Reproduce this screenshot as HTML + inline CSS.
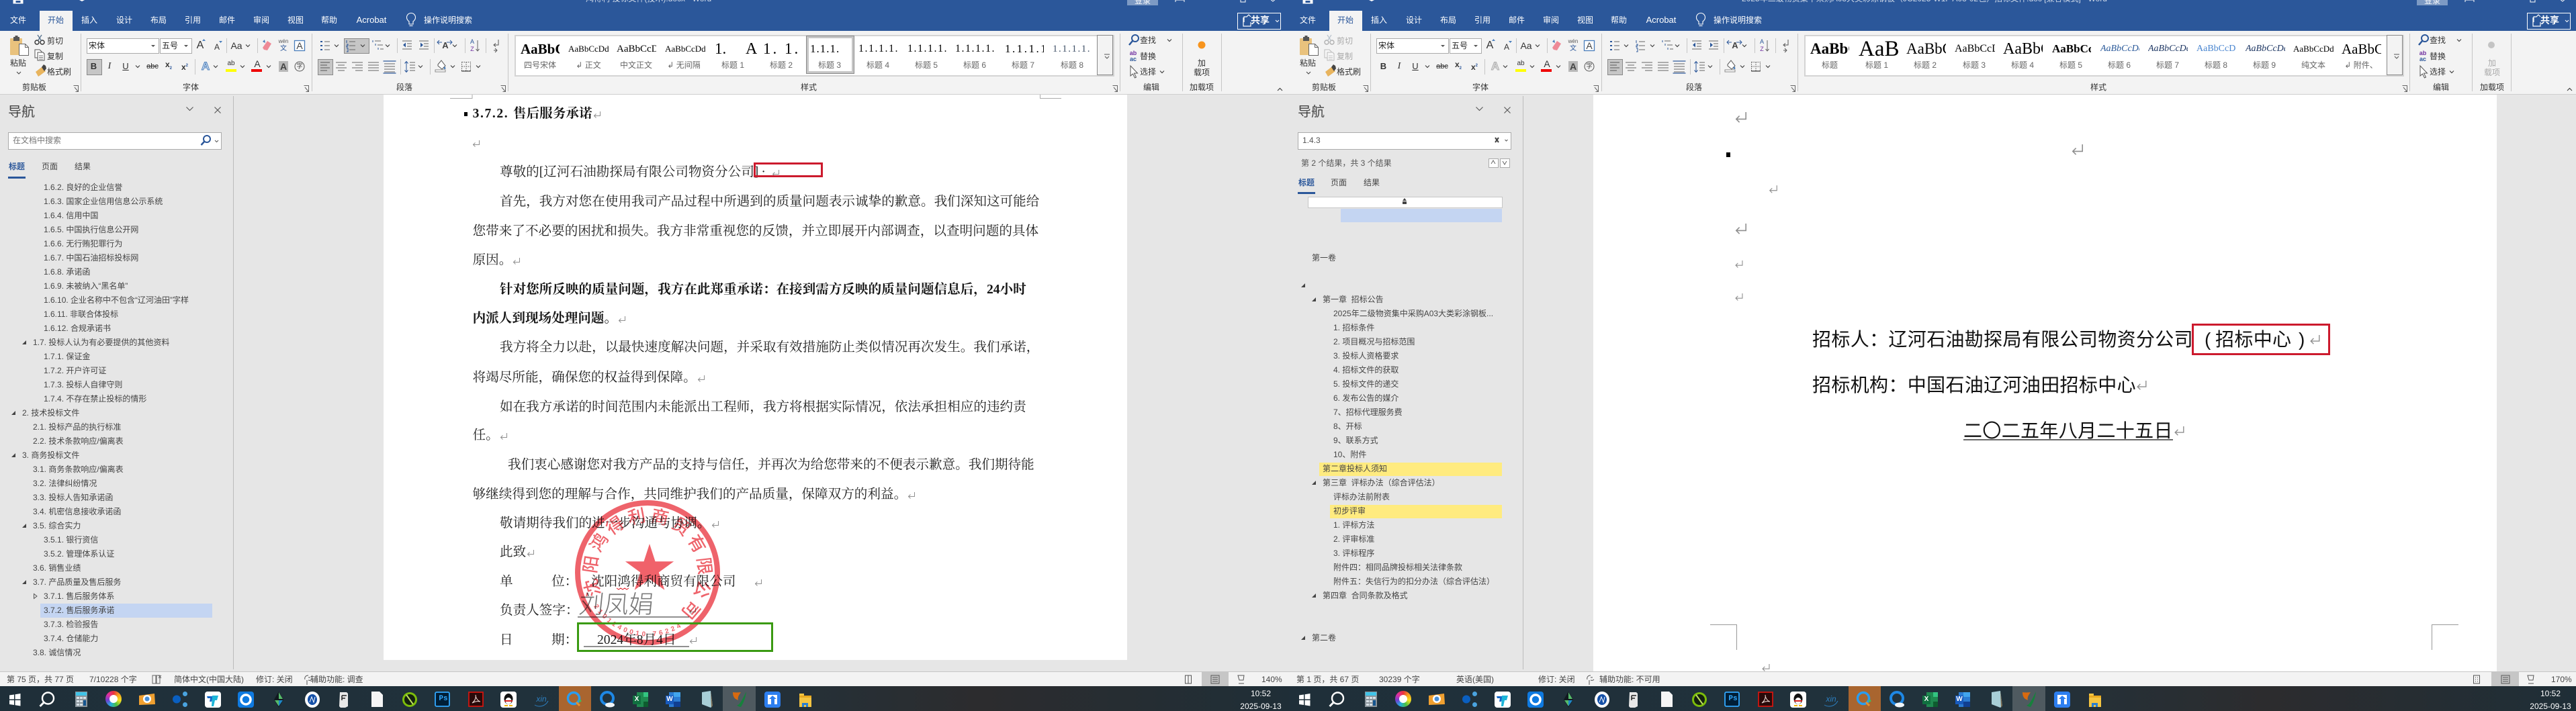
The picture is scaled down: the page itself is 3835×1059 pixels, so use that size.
<!DOCTYPE html>
<html lang="zh-CN"><head><meta charset="utf-8"><title>Word</title>
<style>
html,body{margin:0;padding:0;background:#e6e6e6}
body{position:relative;width:3835px;height:1059px;overflow:hidden;font:12px/14px "Liberation Sans","Noto Sans CJK SC",sans-serif;color:#333}
.w{position:absolute;top:0;height:1059px;overflow:hidden;background:#e6e6e6}
.b{position:absolute}
p{position:absolute;margin:0;white-space:nowrap;transform:translateY(-50%)}
p.c{transform:translate(-50%,-50%)}
.tab{top:30px;color:#fff}
.g{top:97px;color:#666}
.gp{top:73px;overflow:hidden;color:#000;font-family:"Liberation Serif",serif;line-height:34px}
.lb{top:130px;color:#333}
.n{color:#454545}
.d{font:19.6px/24px "Liberation Serif","Noto Serif CJK SC",serif;color:#222}
.dd{font-weight:700;color:#151515}
.h{font:28px/34px "Liberation Sans","Noto Sans CJK SC",sans-serif;letter-spacing:.35px;color:#111;font-weight:400}
.r{display:inline-block;width:12px;height:10px;vertical-align:-1px;margin-left:1px}
.R{position:absolute}
svg.full{position:absolute;left:0;top:0}
.s{top:1012px;color:#444}
.ck{color:#fff;top:1033px}
</style></head><body>
<svg width="0" height="0" style="position:absolute">
<defs>
<symbol id="r" viewBox="0 0 12 10"><path d="M10.5 0V6.5H1.5M4.5 3.5L1.5 6.5L4.5 9.5" fill="none" stroke="#8f8f8f" stroke-width="1"/></symbol>
<g id="cut"><circle cx="55" cy="63" r="3" fill="none" stroke="#333" stroke-width="1.4"/><circle cx="63" cy="63" r="3" fill="none" stroke="#333" stroke-width="1.4"/><path d="M56.5 60.5L62 52M61.5 60.5L56 52" stroke="#5b7590" stroke-width="1.4" fill="none"/></g>
<g id="copy"><path d="M52 74h7l3 3v9h-10z" fill="#fff" stroke="#555"/><path d="M56 78h8l2 2v10h-10z" fill="#fff" stroke="#555"/><path d="M58 83h6M58 85.5h6M58 88h6" stroke="#777"/></g>
<g id="rib">
<path d="M120.5 50V136M464.5 50V136M756.5 50V136M1667.5 50V136M1760.5 50V136M1818.5 50V136M337.5 57V79M383.5 57V79M290.5 88V111M591.5 57V79M646.5 57V79M692.5 57V79M723.5 57V79M596.5 88V111M640.5 88V111" stroke="#c6c6c6" fill="none"/>
<path d="M609 32c-2-1.500-3.500-3.500-3.500-6a6.500 6.500 0 0 1 13 0c0 2.500-1.500 4.500-3.500 6v4h-6zM609.500 38.500h5" fill="none" stroke="#fff" stroke-width="1.100"/>
<rect x="15" y="57" width="18" height="25" rx="1" fill="#e9c27d"/><rect x="20" y="55" width="9" height="6" fill="#555"/><rect x="22.5" y="53" width="4" height="3" fill="#555"/><path d="M28.5 65.5h9l5 5v12h-14z" fill="#fff" stroke="#666"/><path d="M37.5 65.5v5h5" fill="none" stroke="#666"/>
<path d="M25 107l3 3 3-3" stroke="#444" fill="none"/>
<path d="M53 107l9-7 6 6-8 6-3 2z" fill="#e8b45e"/><path d="M62 100l3-4 3 2 1 4-3 4z" fill="#444"/>
<path d="M109.5 127.5h7v9M111 130l5 6M116.5 132v4.5h-4M452.5 127.5h7v9M454 130l5 6M459.5 132v4.5h-4M745.5 127.5h7v9M747 130l5 6M752.5 132v4.5h-4M1656.5 127.5h7v9M1658 130l5 6M1663.5 132v4.5h-4" stroke="#666" fill="none"/>
<path d="M225 67h6l-3 3zM274 67h6l-3 3z" fill="#555"/>
<path d="M202 97.5l3 3 3-3M318 97.5l3 3 3-3M358 97.5l3 3 3-3M397 97.5l3 3 3-3M366 66.5l3 3 3-3M498 66.5l3 3 3-3M537 66.5l3 3 3-3M574 66.5l3 3 3-3M674 66.5l3 3 3-3M623 97.5l3 3 3-3M671 97.5l3 3 3-3M709 97.5l3 3 3-3M1738 58.5l3 3 3-3M1727 105.5l3 3 3-3" stroke="#444" fill="none" stroke-width="1.2"/>
<path d="M301 61l2.5-3 2.5 3zM326 61l2.5 3 2.5-3z" fill="#4a7ebb"/>
<path d="M391 71l7-10 6 4-6 10-5-1z" fill="#ee8a97"/><path d="M391 62l3-3 1 5z" fill="#4a7ebb"/>
<rect x="438.5" y="60.5" width="15" height="15" fill="#fff" stroke="#4a7ebb" stroke-width="1.3"/>
<path d="M477 61h3v2h-3zM477 67h3v2h-3zM477 73h3v2h-3z" fill="#2b579a"/><path d="M483 62h8M483 68h8M483 74h8" stroke="#666" fill="none"/>
<path d="M520 62h9M520 68h9M520 74h9" stroke="#666" fill="none"/><path d="M516 60v4M516 66h2v2h-2v2h2M516 72h2v5h-2" stroke="#2b579a" fill="none"/>
<path d="M558 61h9M562 67h8M566 73h5" stroke="#666" fill="none"/><path d="M555 60v3M559 65v3M563 71v3" stroke="#2b579a" fill="none"/>
<path d="M599 61h14M606 65h7M606 69h7M599 73h14" stroke="#666" fill="none"/><path d="M604 63.5v7l-4-3.5zM626 63.5v7l4-3.5z" fill="#2b579a"/>
<path d="M624 61h14M631 65h7M631 69h7M624 73h14" stroke="#666" fill="none"/>
<path d="M654 60l-3 3 3 3M651 63h7M670 60l3 3-3 3M665 63h7" stroke="#2b579a" fill="none"/>
<path d="M711 60v16M708.5 73l2.5 3 2.5-3" stroke="#666" fill="none"/>
<path d="M742 59v8h-6M738 64.5l-3 2.5 3 2.5M735 75h4M737 72l3 3-3 3" stroke="#555" fill="none"/>
<path d="M477 93h14M477 97h10M477 101h14M477 105h10" stroke="#555" fill="none"/>
<path d="M500 93h16M503 97h10M500 101h16M503 105h10M524 93h16M529 97h11M524 101h16M529 105h11M548 93h16M548 97h16M548 101h16M548 105h16M572 95h16M572 99h16M572 103h16M572 107h16" stroke="#666" fill="none"/>
<path d="M570.5 91h19M570.5 109h19" stroke="#2b579a" stroke-width="1.3" fill="none"/>
<path d="M605 92v15M602.5 94.5l2.5-3 2.5 3M602.5 104.5l2.5 3 2.5-3" stroke="#2b579a" fill="none"/><path d="M610 93h8M610 97h8M610 101h8M610 105h8" stroke="#666" fill="none"/>
<path d="M652 96l5-6 6 8-5 5-6-5z" fill="#fff" stroke="#555"/><path d="M648 104h15v3h-15z" fill="#fff" stroke="#888"/><path d="M662 99c2 2 2 4 0 4-2 0-2-2 0-4z" fill="#4a7ebb"/>
<path d="M687.5 92.5h13v13h-13zM687.5 99h13M694 92.5v13" stroke="#555" stroke-dasharray="1.5 1.5" fill="none"/><path d="M687 106h14" stroke="#333"/>
<circle cx="1690" cy="57" r="5" fill="none" stroke="#2b579a" stroke-width="2"/><path d="M1686 61l-5 6" stroke="#2b579a" stroke-width="2.5"/>
<path d="M1683 98l0 15 3.5-3 3 6 2-1-3-6h5z" fill="#fff" stroke="#555"/>
<path d="M1852 33v-8h4l3-3 3 3 M1851 26v13h11v-6" stroke="#fff" fill="none" stroke-width="1.2"/><path d="M1899 30l2.5 2.5 2.5-2.5" stroke="#fff" fill="none"/>
<path d="M1902 135l3.5-3.5 3.5 3.5" stroke="#444" fill="none" stroke-width="1.2"/>
<path d="M20 -8h14v13h-14zM23 1h8v4h-8z" fill="#fff" stroke="#fff"/><rect x="23.5" y="1" width="7" height="3" fill="#2b579a"/>
<path d="M1750 3V0h13v3M1847 0v3h7V0M1890 -2l5 4 5-4" stroke="#fff" fill="none"/>
<path d="M118 0l4 2 4-2z" fill="#fff"/>
<path d="M277.5 159.5l5 5 5-5M319.5 159.5l9 9M328.5 159.5l-9 9" stroke="#555" fill="none" stroke-width="1.1"/>
<path d="M347.5 143V997" stroke="#bcbcbc" fill="none"/>
</g>
<g id="tb">
<path d="M14 1035.5l7-1v7h-7zM22.5 1034.3l8-1.3v8.5h-8zM14 1043h7v7l-7-1zM22.5 1043h8v8.5l-8-1.3z" fill="#fff"/>
<circle cx="71.5" cy="1040" r="8.5" fill="none" stroke="#fff" stroke-width="2.4"/><path d="M65 1046.5l-5.5 5.5" stroke="#fff" stroke-width="3"/>
<rect x="112" y="1030" width="18" height="23" fill="#8a949b"/><rect x="113" y="1031" width="16" height="5" fill="#3fc4e8"/><path d="M114 1038h4v3h-4zM119 1038h4v3h-4zM124 1038h4v3h-4zM114 1043h4v3h-4zM119 1043h4v3h-4zM114 1048h4v3h-4zM119 1048h4v3h-4z" fill="#d9e2e8"/><rect x="124" y="1043" width="4" height="8" fill="#15558f"/>
<path d="M207 1036l23-3 1 16-24 1z" fill="#f0a030"/><circle cx="219" cy="1041" r="6" fill="#fff"/><circle cx="219" cy="1041" r="3.5" fill="#4a90d9"/>
<circle cx="263" cy="1041.5" r="6" fill="#0a5fc0"/><circle cx="275.5" cy="1033.5" r="3.5" fill="#4aa3df"/><circle cx="275.5" cy="1049.5" r="3.5" fill="#4aa3df"/>
<rect x="305" y="1030" width="24" height="24" rx="4" fill="#fff"/><path d="M308 1037h9l-2 8h-3l1-5h-4z" fill="#1467c8"/><path d="M316 1036h9l-2 7h-3l-2 9h-3z" fill="#1cb5d8"/>
<rect x="354" y="1030" width="24" height="24" rx="4" fill="#0f7ae0"/><circle cx="366" cy="1042" r="7" fill="none" stroke="#fff" stroke-width="3.5"/>
<path d="M415 1030l7 12-7 12-7-12z" fill="#111a1f"/><path d="M415 1031l6 10h-6zM409 1043h6v9z" fill="#55b96a"/><path d="M421 1043l-6 9v-9z" fill="#1e88c8"/>
<ellipse cx="465" cy="1042" rx="11" ry="12" fill="#fff"/><ellipse cx="465" cy="1042" rx="7" ry="8" fill="#1450a8"/><path d="M461 1046l3-8 3 8 2-8" stroke="#fff" fill="none"/>
<path d="M506 1031h10l2 2v19l-4 2h-7l-2-2z" fill="#e8e8e8"/><path d="M509 1036h7M509 1036v7M509 1040h5" stroke="#222" stroke-width="1.5" fill="none"/>
<path d="M553 1030h12l5 5v18h-17z" fill="#f5f5f5"/>
<circle cx="610" cy="1042" r="11" fill="#7cbd0a"/><circle cx="610" cy="1042" r="8" fill="#14210f"/><path d="M605 1035l10 14" stroke="#bfe060" stroke-width="2"/>
<rect x="648" y="1031" width="21" height="21" rx="2" fill="#001e36" stroke="#31a8ff" stroke-width="1.8"/>
<rect x="698" y="1031" width="21" height="21" fill="#2a0a0a" stroke="#d0150f" stroke-width="1.8"/><path d="M703 1047c4-3 6-8 5-12 0 4 3 9 7 10-5-1-8 0-12 2z" fill="none" stroke="#f0ddd8"/>
<rect x="745" y="1030" width="24" height="24" rx="4" fill="#fff"/><ellipse cx="757" cy="1041" rx="6.5" ry="8" fill="#111"/><ellipse cx="757" cy="1044" rx="4.5" ry="5" fill="#fff"/><path d="M751 1043h12v2h-12z" fill="#d81f1f"/><path d="M751 1050h5v2h-5zM758 1050h5v2h-5z" fill="#f4b400"/>
<path d="M796 1050c7 4 16 2 20-6" fill="none" stroke="#2c7fc0"/>
<rect x="832" y="1022" width="48" height="37" fill="#a9652f"/>
<circle cx="854" cy="1040" r="8.5" fill="none" stroke="#2a9df0" stroke-width="3.5"/><path d="M858 1046l5 5" stroke="#e8902c" stroke-width="3"/><path d="M862 1045l3-2" stroke="#3ac060" stroke-width="3"/>
<circle cx="904" cy="1040" r="9" fill="none" stroke="#1e88e5" stroke-width="4"/><ellipse cx="908" cy="1050" rx="7" ry="3.5" fill="#f0f5f8"/>
<rect x="948" y="1031" width="17" height="22" fill="#1f8a50"/><rect x="958" y="1031" width="7" height="7" fill="#33c481"/><rect x="958" y="1045" width="7" height="8" fill="#0e5c2f"/><rect x="942" y="1036" width="12" height="13" fill="#107040"/>
<rect x="996" y="1031" width="17" height="22" fill="#2b7cd3"/><rect x="1003" y="1031" width="10" height="7" fill="#41a5ee"/><rect x="1003" y="1045" width="10" height="8" fill="#103f91"/><rect x="991" y="1036" width="12" height="13" fill="#185abd"/>
<path d="M1045 1031l13-2 3 22-3 3-13-5z" fill="#a8cfd8"/><path d="M1058 1029l3 22-2 3z" fill="#7a6a50"/>
<rect x="1076" y="1022" width="49" height="37" fill="#4f5a60"/>
<path d="M1091 1031c6 1 12 0 12 0l-2 3c-2 3-3 6-2 9l-4-2c-3-2-4-6-4-10z" fill="#d86a10"/><path d="M1111 1030c-1 9-4 17-8 23-4 0-6-3-6-3 4 1 8-8 14-20z" fill="#17803c"/>
<rect x="1138" y="1030" width="24" height="24" rx="4" fill="#2d7ff0"/><path d="M1143 1035h14v14h-4v-8h3l-6-5-5 5h3v8h-5z" fill="#fff"/>
<path d="M1190 1033h7v3h11v17h-18z" fill="#f4c542"/><path d="M1190 1036h18v3h-18z" fill="#e8a920"/><path d="M1194 1053v-6h9v6h-3v-3h-3v3z" fill="#2a7fd0"/>
</g>
</defs></svg>

<!-- LEFT WINDOW -->
<div class="w" style="left:0;width:1920px">
<div class="b" style="left:0;top:0;width:1920px;height:46px;background:#2b579a"></div>
<div class="b" style="left:59px;top:16px;width:49px;height:30px;background:#f3f3f3"></div>
<div class="b" style="left:0;top:46px;width:1920px;height:94px;background:#f3f3f3;border-bottom:1px solid #cfcfcf"></div>
<div class="b" style="left:1678px;top:0;width:46px;height:8px;background:#7d9ac4"></div>
<div class="b" style="left:1842px;top:19px;width:63px;height:23px;border:1px solid #fff"></div>
<div class="b" style="left:129px;top:57px;width:106px;height:21px;background:#fff;border:1px solid #ababab"></div>
<div class="b" style="left:238px;top:57px;width:46px;height:21px;background:#fff;border:1px solid #ababab"></div>
<div class="b" style="left:512px;top:57px;width:36px;height:21px;background:#c6c6c6;border:1px solid #8a8a8a"></div>
<div class="b" style="left:129px;top:88px;width:21px;height:22px;background:#c6c6c6;border:1px solid #8a8a8a"></div>
<div class="b" style="left:473px;top:88px;width:21px;height:22px;background:#c6c6c6;border:1px solid #8a8a8a"></div>
<div class="b" style="left:415px;top:91px;width:14px;height:16px;background:#b8b8b8"></div>
<div class="b" style="left:336px;top:103px;width:16px;height:4px;background:#ff0"></div>
<div class="b" style="left:374px;top:103px;width:16px;height:4px;background:#e00"></div>
<div class="b" style="left:766px;top:52px;width:889px;height:58px;background:#fff;border:2px solid #d4d4d4"></div>
<div class="b" style="left:1633px;top:52px;width:22px;height:58px;background:#f3f3f3;border:1px solid #888"></div>
<div class="b" style="left:1200px;top:53px;width:64px;height:49px;background:#fff;border:4px solid #c6c6c6;outline:1px solid #8a8a8a;outline-offset:-1px"></div>
<div class="b" style="left:571px;top:141px;width:1107px;height:842px;background:#fff"></div>
<div class="b" style="left:12px;top:197px;width:316px;height:24px;background:#fff;border:1px solid #ababab"></div>
<div class="b" style="left:12px;top:263px;width:26px;height:3px;background:#2b579a"></div>
<div class="b" style="left:60px;top:899px;width:256px;height:21px;background:#c4d5f2"></div>
<div class="b" style="left:0;top:1000px;width:1920px;height:22px;background:#f3f3f3;border-top:1px solid #c6c6c6;box-sizing:border-box"></div>
<div class="b" style="left:1789px;top:1001px;width:40px;height:21px;background:#c6c6c6"></div>
<div class="b" style="left:0;top:1022px;width:1920px;height:37px;background:linear-gradient(90deg,#1f2f39 0,#21323c 55%,#2c2c2e 76%,#1f2e37 100%)"></div>
<svg class="full" width="1920" height="1059"><use href="#rib"/><use href="#cut"/><use href="#copy"/><use href="#tb"/>
<path d="M1644 81h8M1645 84l3 3 3-3" stroke="#555" fill="none"/>
<circle cx="1789" cy="67" r="5.5" fill="#f7941d"/>
<circle cx="308" cy="207" r="5" fill="none" stroke="#2b579a" stroke-width="2"/><path d="M304 211l-4.5 5" stroke="#2b579a" stroke-width="2.5"/><path d="M320 209l2.5 2.5 2.5-2.5" stroke="#555" fill="none"/>
<path d="M39 507V513H33ZM23 612V618H17ZM23 675V681H17ZM39 780V786H33ZM39 864V870H33Z" fill="#444"/>
<path d="M50.5 884.5l4.5 3.5-4.5 3.5z" fill="none" stroke="#555"/>
<path d="M670 146.5h33M703 141v6M1548 146.5h32M1548.5 141v6" stroke="#aaa" fill="none"/>
<path d="M227 1006h5v12h-5zM233 1006h5v12h-5zM236 1006l4 4M240 1006l-4 4" stroke="#666" fill="none"/>
<path d="M459 1006c-4 0-6 3-5 6M457 1013v7M459 1009h3M459 1013c3 1 4 0 5-1" stroke="#555" fill="none"/>
<path d="M1764.5 1006h9v12h-9zM1769 1006v12M1803 1006h12v12h-12zM1805 1009h8M1805 1012h8M1805 1015h8M1843 1006h9l-1 7h-6zM1844 1018h8" stroke="#555" fill="none"/>
<rect x="691" y="167" width="5" height="6" fill="#000"/>
<path d="M860 919h166M869 963h157" stroke="#222" stroke-width="1"/>
<path d="M918 876l3 2 3-2 3 2 3-2 3 2 3-2" stroke="#e0141e" fill="none"/>
</svg>
<div class="b" style="left:157px;top:1029px;width:24px;height:24px;border-radius:50%;background:conic-gradient(#e8323c,#f4a020,#f5e020,#4ac040,#20b0e0,#7040d0,#e030a0,#e8323c)"></div>
<div class="b" style="left:163px;top:1035px;width:12px;height:12px;border-radius:50%;background:#fff"></div>

<p style="left:872px;top:-2px;color:#cfd9e8">鸿得利 投标文件(技术).docx - Word</p>
<p class="c" style="left:1701px;top:1px;color:#fff">登录</p>
<p class="c tab" style="left:27px">文件</p><p class="c tab" style="left:83px;color:#2b579a">开始</p><p class="c tab" style="left:133px">插入</p><p class="c tab" style="left:185px">设计</p><p class="c tab" style="left:236px">布局</p><p class="c tab" style="left:287px">引用</p><p class="c tab" style="left:338px">邮件</p><p class="c tab" style="left:389px">审阅</p><p class="c tab" style="left:440px">视图</p><p class="c tab" style="left:490px">帮助</p><p class="c tab" style="left:553px;font-size:13px">Acrobat</p>
<p class="c tab" style="left:667px">操作说明搜索</p>
<p class="c tab" style="left:1876px;font-size:14px;font-weight:700">共享</p>

<p class="c" style="left:27px;top:94px">粘贴</p><p style="left:70px;top:61px">剪切</p><p style="left:70px;top:84px">复制</p><p style="left:70px;top:107px">格式刷</p><p class="c lb" style="left:51px">剪贴板</p>
<p style="left:132px;top:68px;font-size:12px;color:#222">宋体</p><p style="left:241px;top:68px;color:#222">五号</p>
<p class="c" style="left:298px;top:68px;font-size:16px">A</p><p class="c" style="left:323px;top:70px;font-size:12px">A</p><p class="c" style="left:352px;top:68px;font-size:14px">Aa</p>
<p class="c" style="left:422px;top:62px;font-size:8px;color:#555">wén</p><p class="c" style="left:422px;top:73px;font-size:10px;color:#2b579a">文</p><p class="c" style="left:446px;top:68px;font-size:14px;color:#444">A</p>
<p class="c" style="left:139.5px;top:99px;font-size:13px;font-weight:700">B</p><p class="c" style="left:163px;top:99px;font:italic 14px 'Liberation Serif',serif">I</p><p class="c" style="left:187px;top:99px;font-size:13px;text-decoration:underline">U</p><p class="c" style="left:227px;top:99px;font-size:11px;text-decoration:line-through">abc</p><p class="c" style="left:251px;top:99px;font-size:12px;font-weight:700">x<sub style="font-size:6px;color:#2b579a">2</sub></p><p class="c" style="left:275px;top:99px;font-size:12px;font-weight:700">x<sup style="font-size:6px;color:#2b579a">2</sup></p>
<p class="c" style="left:306px;top:99px;font-size:17px;font-weight:700;color:#dbe7f5;-webkit-text-stroke:1px #4a7ebb">A</p>
<p class="c" style="left:344px;top:95px;font-size:10px">ab</p><p class="c" style="left:383px;top:95px;font-size:14px;color:#333">A</p><p class="c" style="left:422px;top:99px;font-size:14px;font-weight:700;color:#444">A</p><p class="c" style="left:446px;top:99px;font-size:9px;border:1px solid #555;border-radius:50%;width:13px;height:13px;line-height:13px;text-align:center">字</p>
<p class="c lb" style="left:284px">字体</p>
<p class="c" style="left:663px;top:68px;font-size:13px;font-weight:700;color:#444">A</p><p class="c" style="left:703px;top:62px;font-size:9px;color:#2b579a">A</p><p class="c" style="left:703px;top:73px;font-size:9px;color:#7030a0">Z</p>
<p class="c lb" style="left:602px">段落</p>
<p class="gp" style="left:775px;width:58px;font-size:21px;font-weight:700">AaBbCc</p><p class="gp" style="left:846px;width:60px;font-size:13px">AaBbCcDdE</p><p class="gp" style="left:918px;width:59px;font-size:15px">AaBbCcDd</p><p class="gp" style="left:990px;width:60px;font-size:13px">AaBbCcDdE</p>
<p class="gp" style="left:1064px;font-size:23px">1.</p><p class="gp" style="left:1110px;font-size:24px">A</p><p class="gp" style="left:1136px;font-size:23px;letter-spacing:3px">1. 1.</p><p class="gp" style="left:1206px;font-size:17px;letter-spacing:1px">1.1.1.</p><p class="gp" style="left:1278px;font-size:16px;letter-spacing:1.5px">1.1.1.1.</p><p class="gp" style="left:1351px;font-size:16px;letter-spacing:1.5px">1.1.1.1.</p><p class="gp" style="left:1422px;font-size:16px;letter-spacing:1.5px">1.1.1.1.</p><p class="gp" style="left:1496px;width:58px;font-size:17px;letter-spacing:2.5px">1.1.1.1.</p><p class="gp" style="left:1567px;font-size:15px;letter-spacing:1.5px;color:#44546a">1.1.1.1.</p>
<p class="c g" style="left:804px">四号宋体</p><p class="c g" style="left:876px">↲ 正文</p><p class="c g" style="left:947px">中文正文</p><p class="c g" style="left:1018px">↲ 无间隔</p><p class="c g" style="left:1091px">标题 1</p><p class="c g" style="left:1163px">标题 2</p><p class="c g" style="left:1235px">标题 3</p><p class="c g" style="left:1307px">标题 4</p><p class="c g" style="left:1379px">标题 5</p><p class="c g" style="left:1451px">标题 6</p><p class="c g" style="left:1523px">标题 7</p><p class="c g" style="left:1596px">标题 8</p>
<p class="c lb" style="left:1204px">样式</p>
<p style="left:1697px;top:60px">查找</p><p style="left:1697px;top:84px">替换</p><p style="left:1697px;top:107px">选择</p><p class="c" style="left:1687px;top:79px;font-size:9px;font-weight:700;color:#7030a0">ab</p><p class="c" style="left:1687px;top:88px;font-size:9px;font-weight:700;color:#2b579a">ac</p><p class="c lb" style="left:1714px">编辑</p>
<p class="c" style="left:1789px;top:94px">加</p><p class="c" style="left:1789px;top:108px">载项</p><p class="c lb" style="left:1789px">加载项</p>

<p style="left:12px;top:167px;font-size:20px;line-height:24px;color:#444">导航</p>
<p style="left:19px;top:209px;color:#777">在文档中搜索</p>
<p style="left:13px;top:248px;color:#2b579a;font-weight:700">标题</p><p style="left:62px;top:248px;color:#444">页面</p><p style="left:111px;top:248px;color:#444">结果</p>
<p class="n" style="left:65px;top:279px">1.6.2. 良好的企业信誉</p><p class="n" style="left:65px;top:300px">1.6.3. 国家企业信用信息公示系统</p><p class="n" style="left:65px;top:321px">1.6.4. 信用中国</p><p class="n" style="left:65px;top:342px">1.6.5. 中国执行信息公开网</p><p class="n" style="left:65px;top:363px">1.6.6. 无行贿犯罪行为</p><p class="n" style="left:65px;top:384px">1.6.7. 中国石油招标投标网</p><p class="n" style="left:65px;top:405px">1.6.8. 承诺函</p><p class="n" style="left:65px;top:426px">1.6.9. 未被纳入“黑名单”</p><p class="n" style="left:65px;top:447px">1.6.10. 企业名称中不包含“辽河油田”字样</p><p class="n" style="left:65px;top:468px">1.6.11. 非联合体投标</p><p class="n" style="left:65px;top:489px">1.6.12. 合规承诺书</p>
<p class="n" style="left:49px;top:510px">1.7. 投标人认为有必要提供的其他资料</p><p class="n" style="left:65px;top:531px">1.7.1. 保证金</p><p class="n" style="left:65px;top:552px">1.7.2. 开户许可证</p><p class="n" style="left:65px;top:573px">1.7.3. 投标人自律守则</p><p class="n" style="left:65px;top:594px">1.7.4. 不存在禁止投标的情形</p>
<p class="n" style="left:33px;top:615px">2. 技术投标文件</p><p class="n" style="left:49px;top:636px">2.1. 投标产品的执行标准</p><p class="n" style="left:49px;top:657px">2.2. 技术条款响应/偏离表</p>
<p class="n" style="left:33px;top:678px">3. 商务投标文件</p><p class="n" style="left:49px;top:699px">3.1. 商务条款响应/偏离表</p><p class="n" style="left:49px;top:720px">3.2. 法律纠纷情况</p><p class="n" style="left:49px;top:741px">3.3. 投标人告知承诺函</p><p class="n" style="left:49px;top:762px">3.4. 机密信息接收承诺函</p><p class="n" style="left:49px;top:783px">3.5. 综合实力</p><p class="n" style="left:65px;top:804px">3.5.1. 银行资信</p><p class="n" style="left:65px;top:825px">3.5.2. 管理体系认证</p><p class="n" style="left:49px;top:846px">3.6. 销售业绩</p><p class="n" style="left:49px;top:867px">3.7. 产品质量及售后服务</p><p class="n" style="left:65px;top:888px">3.7.1. 售后服务体系</p><p class="n" style="left:65px;top:909px">3.7.2. 售后服务承诺</p><p class="n" style="left:65px;top:930px">3.7.3. 检验报告</p><p class="n" style="left:65px;top:951px">3.7.4. 仓储能力</p><p class="n" style="left:49px;top:972px">3.8. 诚信情况</p>

<p class="d dd" style="left:703.6px;top:170px;letter-spacing:1.6px">3.7.2.</p><p class="d dd" style="left:764px;top:170px">售后服务承诺<svg class="r"><use href="#r"/></svg></p>
<svg class="R" style="left:703px;top:209px" width="12" height="10"><use href="#r"/></svg>
<p class="d" style="left:744px;top:257px">尊敬的[辽河石油勘探局有限公司物资分公司]<span style="margin-left:4px">·</span><svg class="r" style="margin-left:9px"><use href="#r"/></svg></p>
<p class="d" style="left:744px;top:301px">首先，我方对您在使用我司产品过程中所遇到的质量问题表示诚挚的歉意。我们深知这可能给</p>
<p class="d" style="left:703.6px;top:345px">您带来了不必要的困扰和损失。我方非常重视您的反馈，并立即展开内部调查，以查明问题的具体</p>
<p class="d" style="left:703.6px;top:388px">原因。<svg class="r"><use href="#r"/></svg></p>
<p class="d dd" style="left:744px;top:432px">针对您所反映的质量问题，我方在此郑重承诺：在接到需方反映的质量问题信息后，24小时</p>
<p class="d dd" style="left:703.6px;top:475px">内派人到现场处理问题。<svg class="r"><use href="#r"/></svg></p>
<p class="d" style="left:744px;top:518px">我方将全力以赴，以最快速度解决问题，并采取有效措施防止类似情况再次发生。我们承诺，</p>
<p class="d" style="left:703.6px;top:563px">将竭尽所能，确保您的权益得到保障。<svg class="r"><use href="#r"/></svg></p>
<p class="d" style="left:744px;top:607px">如在我方承诺的时间范围内未能派出工程师，我方将根据实际情况，依法承担相应的违约责</p>
<p class="d" style="left:703.6px;top:649px">任。<svg class="r"><use href="#r"/></svg></p>
<p class="d" style="left:756px;top:693px">我们衷心感谢您对我方产品的支持与信任，并再次为给您带来的不便表示歉意。我们期待能</p>
<p class="d" style="left:703.6px;top:737px">够继续得到您的理解与合作，共同维护我们的产品质量，保障双方的利益。<svg class="r"><use href="#r"/></svg></p>
<p class="d" style="left:744px;top:780px">敬请期待我们的进一步沟通与协调。<svg class="r"><use href="#r"/></svg></p>
<p class="d" style="left:744px;top:823px">此致<svg class="r"><use href="#r"/></svg></p>
<p class="d" style="left:744px;top:867px">单</p><p class="d" style="left:821px;top:867px">位：</p><p class="d" style="left:880px;top:867px">沈阳鸿得利商贸有限公司<svg class="r" style="margin-left:27px"><use href="#r"/></svg></p>
<p class="d" style="left:744px;top:910px">负责人签字：</p>
<svg class="R" style="left:1025px;top:905px" width="12" height="10"><use href="#r"/></svg>
<p class="d" style="left:744px;top:954px">日</p><p class="d" style="left:821px;top:954px">期：</p><p class="d" style="left:889px;top:954px">2024年8月4日</p>
<svg class="R" style="left:1026px;top:949px" width="12" height="10"><use href="#r"/></svg>
<p style="left:862px;top:901px;font-size:37px;line-height:44px;color:#777;font-weight:300;transform:translateY(-50%) skewX(-6deg)">刘凤娟</p>
<svg class="R" style="left:844px;top:733px;mix-blend-mode:multiply;opacity:.8" width="240" height="240" viewBox="0 0 240 240">
<defs><path id="sa" d="M51.1 152.1A76 76 0 1 1 168.9 178.2"/><path id="sb" d="M40 170A95 95 0 0 0 181 193"/></defs>
<circle cx="120" cy="120" r="104" fill="none" stroke="#ea3c46" stroke-width="8"/>
<path d="M123 77L131.5 103.3L159.1 103.3L136.8 119.5L145.3 145.7L123 129.5L100.7 145.7L109.2 119.5L86.9 103.3L114.5 103.3Z" fill="#ec3a44"/>
<text font-family="'Noto Sans CJK SC',sans-serif" font-size="26" font-weight="500" fill="#ea3c46"><textPath href="#sa" textLength="338" lengthAdjust="spacing">沈阳鸿得利商贸有限公司</textPath></text>
<text font-family="'Liberation Sans',sans-serif" font-size="10" font-weight="700" fill="#ea3c46"><textPath href="#sb" textLength="148">2101140010 76224</textPath></text>
</svg>
<div class="b" style="left:1122px;top:242px;width:97px;height:16px;border:3px solid #cc1a2d"></div>
<div class="b" style="left:859px;top:927px;width:286px;height:38px;border:3px solid #3a9a12"></div>

<p class="s" style="left:10px">第 75 页，共 77 页</p><p class="s" style="left:133px">7/10228 个字</p><p class="s" style="left:259px">简体中文(中国大陆)</p><p class="s" style="left:381px">修订: 关闭</p><p class="s" style="left:462px">辅助功能: 调查</p><p class="s" style="left:1878px">140%</p>
<p class="c" style="left:660px;top:1041px;font:700 11px 'Liberation Mono',monospace;color:#31a8ff">Ps</p><p class="c" style="left:948px;top:1042px;color:#fff;font-size:10px;font-weight:700">X</p><p class="c" style="left:997px;top:1042px;color:#fff;font-size:10px;font-weight:700">W</p><p class="c" style="left:806px;top:1041px;color:#2c7fc0;font-size:12px;font-style:italic">xin</p>
<p class="c ck" style="left:1877px">10:52</p><p class="c ck" style="left:1877px;top:1052px">2025-09-13</p>
</div>

<!-- RIGHT WINDOW -->
<div class="w" style="left:1920px;width:1915px">
<div class="b" style="left:0;top:0;width:1915px;height:46px;background:#2b579a"></div>
<div class="b" style="left:59px;top:16px;width:49px;height:30px;background:#f3f3f3"></div>
<div class="b" style="left:0;top:46px;width:1915px;height:94px;background:#f3f3f3;border-bottom:1px solid #cfcfcf"></div>
<div class="b" style="left:1678px;top:0;width:46px;height:8px;background:#7d9ac4"></div>
<div class="b" style="left:1842px;top:19px;width:63px;height:23px;border:1px solid #fff"></div>
<div class="b" style="left:129px;top:57px;width:106px;height:21px;background:#fff;border:1px solid #ababab"></div>
<div class="b" style="left:238px;top:57px;width:46px;height:21px;background:#fff;border:1px solid #ababab"></div>
<div class="b" style="left:473px;top:88px;width:21px;height:22px;background:#c6c6c6;border:1px solid #8a8a8a"></div>
<div class="b" style="left:415px;top:91px;width:14px;height:16px;background:#b8b8b8"></div>
<div class="b" style="left:336px;top:103px;width:16px;height:4px;background:#ff0"></div>
<div class="b" style="left:374px;top:103px;width:16px;height:4px;background:#e00"></div>
<div class="b" style="left:766px;top:52px;width:889px;height:58px;background:#fff;border:2px solid #d4d4d4"></div>
<div class="b" style="left:1633px;top:52px;width:22px;height:58px;background:#f3f3f3;border:1px solid #888"></div>
<div class="b" style="left:452px;top:141px;width:1345px;height:859px;background:#fff"></div>
<div class="b" style="left:12px;top:197px;width:316px;height:24px;background:#fff;border:1px solid #ababab"></div>
<div class="b" style="left:296px;top:236px;width:13px;height:12px;background:#fff;border:1px solid #ababab"></div>
<div class="b" style="left:313px;top:236px;width:13px;height:12px;background:#fff;border:1px solid #ababab"></div>
<div class="b" style="left:12px;top:286px;width:26px;height:3px;background:#2b579a"></div>
<div class="b" style="left:27px;top:293px;width:288px;height:15px;background:#fff;border:1px solid #c6c6c6"></div>
<div class="b" style="left:76px;top:311px;width:240px;height:20px;background:#c4d5f2"></div>
<div class="b" style="left:44px;top:689px;width:272px;height:20px;background:#ffeb7f"></div>
<div class="b" style="left:60px;top:752px;width:256px;height:20px;background:#ffeb7f"></div>
<div class="b" style="left:0;top:1000px;width:1915px;height:22px;background:#f3f3f3;border-top:1px solid #c6c6c6;box-sizing:border-box"></div>
<div class="b" style="left:1789px;top:1001px;width:41px;height:21px;background:#c6c6c6"></div>
<div class="b" style="left:0;top:1022px;width:1915px;height:37px;background:linear-gradient(90deg,#1f2f39 0,#21323c 55%,#2c2c2e 76%,#1f2e37 100%)"></div>
<svg class="full" width="1915" height="1059"><use href="#rib"/><use href="#cut" opacity=".35"/><use href="#copy" opacity=".35"/><use href="#tb"/>
<path d="M1644 81h8M1645 84l3 3 3-3" stroke="#555" fill="none"/>
<circle cx="1789" cy="67" r="5" fill="#c4c4c4"/>
<path d="M300 244l3-5 3 5M317 240l3 5 3-5" stroke="#666" fill="none"/>
<path d="M306 205l5 7M311 205l-5 7" stroke="#444" stroke-width="2" fill="none"/><path d="M320.5 208l2 2 2-2" stroke="#555" fill="none"/>
<path d="M168 299h6l-3-4zM168 304h6v-4h-6z" fill="#444"/>
<path d="M23 422V428H17ZM39 443V449H33ZM39 716V722H33ZM39 884V890H33ZM23 947V953H17Z" fill="#444"/>
<rect x="650" y="227" width="6" height="7" fill="#000"/>
<path d="M626 930.5h39M665.5 930v38M1700.5 930v38M1700 930.5h40" stroke="#999" fill="none"/>
<path d="M1003 655h312" stroke="#111" stroke-width="1.3"/>
<path d="M448 1006c-4 0-6 3-5 6M446 1013v7M448 1009h3M448 1013c3 1 4 0 5-1" stroke="#555" fill="none"/>
<path d="M1762.5 1006h9v12h-9zM1765 1009h1M1768 1009h1M1765 1012h1M1768 1012h1M1765 1015h1M1768 1015h1M1804 1006h12v12h-12zM1806 1009h8M1806 1012h8M1806 1015h8M1843 1006h9l-1 7h-6zM1844 1018h8" stroke="#555" fill="none"/>
</svg>
<div class="b" style="left:157px;top:1029px;width:24px;height:24px;border-radius:50%;background:conic-gradient(#e8323c,#f4a020,#f5e020,#4ac040,#20b0e0,#7040d0,#e030a0,#e8323c)"></div>
<div class="b" style="left:163px;top:1035px;width:12px;height:12px;border-radius:50%;background:#fff"></div>

<p style="left:673px;top:-2px;color:#cfd9e8">2025年二级物资集中采购A03大类彩涂钢板（JC2025-W1F A03-02包）招标文件.doc [兼容模式] - Word</p>
<p class="c" style="left:1701px;top:1px;color:#fff">登录</p>
<p class="c tab" style="left:27px">文件</p><p class="c tab" style="left:83px;color:#2b579a">开始</p><p class="c tab" style="left:133px">插入</p><p class="c tab" style="left:185px">设计</p><p class="c tab" style="left:236px">布局</p><p class="c tab" style="left:287px">引用</p><p class="c tab" style="left:338px">邮件</p><p class="c tab" style="left:389px">审阅</p><p class="c tab" style="left:440px">视图</p><p class="c tab" style="left:490px">帮助</p><p class="c tab" style="left:553px;font-size:13px">Acrobat</p>
<p class="c tab" style="left:667px">操作说明搜索</p>
<p class="c tab" style="left:1876px;font-size:14px;font-weight:700">共享</p>

<p class="c" style="left:27px;top:94px">粘贴</p><p style="left:70px;top:61px;color:#aaa">剪切</p><p style="left:70px;top:84px;color:#aaa">复制</p><p style="left:70px;top:107px">格式刷</p><p class="c lb" style="left:51px">剪贴板</p>
<p style="left:132px;top:68px;color:#222">宋体</p><p style="left:241px;top:68px;color:#222">五号</p>
<p class="c" style="left:298px;top:68px;font-size:16px">A</p><p class="c" style="left:323px;top:70px;font-size:12px">A</p><p class="c" style="left:352px;top:68px;font-size:14px">Aa</p>
<p class="c" style="left:422px;top:62px;font-size:8px;color:#555">wén</p><p class="c" style="left:422px;top:73px;font-size:10px;color:#2b579a">文</p><p class="c" style="left:446px;top:68px;font-size:14px;color:#444">A</p>
<p class="c" style="left:139.5px;top:99px;font-size:13px;font-weight:700">B</p><p class="c" style="left:163px;top:99px;font:italic 14px 'Liberation Serif',serif">I</p><p class="c" style="left:187px;top:99px;font-size:13px;text-decoration:underline">U</p><p class="c" style="left:227px;top:99px;font-size:11px;text-decoration:line-through">abc</p><p class="c" style="left:251px;top:99px;font-size:12px;font-weight:700">x<sub style="font-size:6px;color:#2b579a">2</sub></p><p class="c" style="left:275px;top:99px;font-size:12px;font-weight:700">x<sup style="font-size:6px;color:#2b579a">2</sup></p>
<p class="c" style="left:306px;top:99px;font-size:17px;font-weight:700;color:#e8e8e8;-webkit-text-stroke:1px #aaa">A</p>
<p class="c" style="left:344px;top:95px;font-size:10px">ab</p><p class="c" style="left:383px;top:95px;font-size:14px;color:#333">A</p><p class="c" style="left:422px;top:99px;font-size:14px;font-weight:700;color:#444">A</p><p class="c" style="left:446px;top:99px;font-size:9px;border:1px solid #555;border-radius:50%;width:13px;height:13px;line-height:13px;text-align:center">字</p>
<p class="c lb" style="left:284px">字体</p>
<p class="c" style="left:663px;top:68px;font-size:13px;font-weight:700;color:#444">A</p><p class="c" style="left:703px;top:62px;font-size:9px;color:#2b579a">A</p><p class="c" style="left:703px;top:73px;font-size:9px;color:#7030a0">Z</p>
<p class="c lb" style="left:602px">段落</p>
<p class="gp" style="left:775px;width:58px;font-size:23px;font-weight:700">AaBbCc</p><p class="gp" style="left:847px;width:59px;font-size:33px">AaBb</p><p class="gp" style="left:918px;width:59px;font-size:23px">AaBbCc</p><p class="gp" style="left:990px;width:60px;font-size:16px">AaBbCcD</p><p class="gp" style="left:1062px;width:59px;font-size:24px">AaBbCc</p><p class="gp" style="left:1135px;width:58px;font-size:17px;font-weight:700">AaBbCcD</p><p class="gp" style="left:1207px;width:58px;font-size:14px;font-style:italic;color:#2b5a9a">AaBbCcDd.</p><p class="gp" style="left:1278px;width:59px;font-size:14px;font-style:italic;color:#1f3864">AaBbCcDd.</p><p class="gp" style="left:1350px;width:59px;font-size:14px;color:#4a86d0">AaBbCcDd</p><p class="gp" style="left:1423px;width:59px;font-size:14px;font-style:italic;color:#1f3864">AaBbCcDd.</p><p class="gp" style="left:1494px;width:60px;font-size:13px">AaBbCcDdE</p><p class="gp" style="left:1566px;width:59px;font-size:21px">AaBbCc</p>
<p class="c g" style="left:804px">标题</p><p class="c g" style="left:874px">标题 1</p><p class="c g" style="left:946px">标题 2</p><p class="c g" style="left:1019px">标题 3</p><p class="c g" style="left:1091px">标题 4</p><p class="c g" style="left:1163px">标题 5</p><p class="c g" style="left:1235px">标题 6</p><p class="c g" style="left:1307px">标题 7</p><p class="c g" style="left:1379px">标题 8</p><p class="c g" style="left:1451px">标题 9</p><p class="c g" style="left:1524px">纯文本</p><p class="c g" style="left:1595px">↲ 附件、</p>
<p class="c lb" style="left:1204px">样式</p>
<p style="left:1697px;top:60px">查找</p><p style="left:1697px;top:84px">替换</p><p style="left:1697px;top:107px">选择</p><p class="c" style="left:1687px;top:79px;font-size:9px;font-weight:700;color:#7030a0">ab</p><p class="c" style="left:1687px;top:88px;font-size:9px;font-weight:700;color:#2b579a">ac</p><p class="c lb" style="left:1714px">编辑</p>
<p class="c" style="left:1790px;top:94px;color:#aaa">加</p><p class="c" style="left:1790px;top:108px;color:#aaa">载项</p><p class="c lb" style="left:1790px">加载项</p>

<p style="left:12px;top:167px;font-size:20px;line-height:24px;color:#444">导航</p>
<p style="left:19px;top:209px;color:#555">1.4.3</p>
<p style="left:17px;top:243px;color:#555">第 2 个结果，共 3 个结果</p>
<p style="left:13px;top:272px;color:#2b579a;font-weight:700">标题</p><p style="left:61px;top:272px;color:#444">页面</p><p style="left:110px;top:272px;color:#444">结果</p>
<p class="n" style="left:33px;top:384px">第一卷</p>
<p class="n" style="left:49px;top:446px">第一章&nbsp;&nbsp;招标公告</p><p class="n" style="left:65px;top:467px">2025年二级物资集中采购A03大类彩涂钢板...</p><p class="n" style="left:65px;top:488px">1. 招标条件</p><p class="n" style="left:65px;top:509px">2. 项目概况与招标范围</p><p class="n" style="left:65px;top:530px">3. 投标人资格要求</p><p class="n" style="left:65px;top:551px">4. 招标文件的获取</p><p class="n" style="left:65px;top:572px">5. 投标文件的递交</p><p class="n" style="left:65px;top:593px">6. 发布公告的媒介</p><p class="n" style="left:65px;top:614px">7、招标代理服务费</p><p class="n" style="left:65px;top:635px">8、开标</p><p class="n" style="left:65px;top:656px">9、联系方式</p><p class="n" style="left:65px;top:677px">10、附件</p>
<p class="n" style="left:49px;top:698px">第二章投标人须知</p><p class="n" style="left:49px;top:719px">第三章&nbsp;&nbsp;评标办法（综合评估法）</p><p class="n" style="left:65px;top:740px">评标办法前附表</p><p class="n" style="left:65px;top:761px">初步评审</p><p class="n" style="left:65px;top:782px">1. 评标方法</p><p class="n" style="left:65px;top:803px">2. 评审标准</p><p class="n" style="left:65px;top:824px">3. 评标程序</p><p class="n" style="left:65px;top:845px">附件四：相同品牌投标相关法律条款</p><p class="n" style="left:65px;top:866px">附件五：失信行为的扣分办法（综合评估法）</p><p class="n" style="left:49px;top:887px">第四章&nbsp;&nbsp;合同条款及格式</p><p class="n" style="left:33px;top:950px">第二卷</p>

<svg class="R" style="left:662px;top:167px" width="20" height="16"><use href="#r"/></svg>
<svg class="R" style="left:1163px;top:215px" width="20" height="16"><use href="#r"/></svg>
<svg class="R" style="left:713px;top:276px" width="14" height="12"><use href="#r"/></svg>
<svg class="R" style="left:662px;top:333px" width="20" height="16"><use href="#r"/></svg>
<svg class="R" style="left:662px;top:388px" width="14" height="11"><use href="#r"/></svg>
<svg class="R" style="left:662px;top:437px" width="14" height="11"><use href="#r"/></svg>
<svg class="R" style="left:702px;top:989px" width="14" height="11"><use href="#r"/></svg>
<p class="h" style="left:778px;top:506px">招标人：辽河石油勘探局有限公司物资分公司</p>
<p class="h" style="left:1362px;top:506px">(</p><p class="h" style="left:1378px;top:506px">招标中心</p><p class="h" style="left:1502px;top:506px">)</p>
<svg class="R" style="left:1518px;top:499px" width="17" height="14"><use href="#r"/></svg>
<p class="h" style="left:778px;top:574px">招标机构：中国石油辽河油田招标中心</p>
<svg class="R" style="left:1260px;top:567px" width="17" height="14"><use href="#r"/></svg>
<p class="h" style="left:1003px;top:642px">二〇二五年八月二十五日</p>
<svg class="R" style="left:1316px;top:635px" width="17" height="14"><use href="#r"/></svg>
<div class="b" style="left:1343px;top:482px;width:200px;height:41px;border:3px solid #cc1a2d"></div>

<p class="s" style="left:10px">第 1 页，共 67 页</p><p class="s" style="left:133px">30239 个字</p><p class="s" style="left:248px">英语(美国)</p><p class="s" style="left:370px">修订: 关闭</p><p class="s" style="left:461px">辅助功能: 不可用</p><p class="s" style="left:1878px">170%</p>
<p class="c" style="left:660px;top:1041px;font:700 11px 'Liberation Mono',monospace;color:#31a8ff">Ps</p><p class="c" style="left:948px;top:1042px;color:#fff;font-size:10px;font-weight:700">X</p><p class="c" style="left:997px;top:1042px;color:#fff;font-size:10px;font-weight:700">W</p><p class="c" style="left:806px;top:1041px;color:#2c7fc0;font-size:12px;font-style:italic">xin</p>
<p class="c ck" style="left:1877px">10:52</p><p class="c ck" style="left:1877px;top:1052px">2025-09-13</p>
</div>
</body></html>
